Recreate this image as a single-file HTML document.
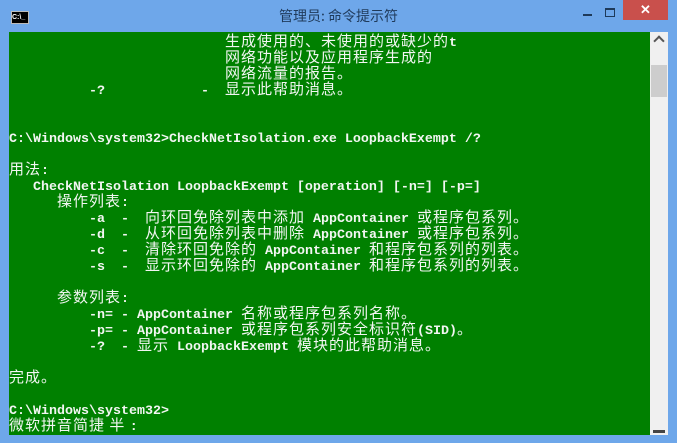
<!DOCTYPE html>
<html><head><meta charset="utf-8"><style>
body{margin:0;width:677px;height:443px;background:#6ea7ea;position:relative;overflow:hidden;font-family:"Liberation Mono","Noto Sans CJK SC",monospace}
#con{position:absolute;left:9px;top:32px;width:641px;height:403px;background:#008000}
#sb{position:absolute;left:650px;top:32px;width:18px;height:403px;background:#f0f0f0}
.l{position:absolute;left:0;margin-top:-3px;height:16px;line-height:16px;white-space:pre;color:#f2f6f2;font-size:13.33px;font-weight:bold}
.l::before{content:"\3000";display:inline-block;width:0;overflow:hidden;font-family:"Noto Sans CJK SC",sans-serif;font-weight:normal;font-size:15px;vertical-align:baseline}
.c{font-family:"Noto Sans CJK SC","WenQuanYi Zen Hei",sans-serif;font-weight:normal;font-size:15px;letter-spacing:1px}
#title{position:absolute;left:0;width:677px;top:6px;text-align:center;font-family:"Noto Sans CJK SC",sans-serif;font-size:14px;color:#1f3a5a}
</style></head><body>
<div style="position:absolute;left:11px;top:11px;width:16px;height:11px;background:#000;border:1px solid #bbb;color:#fff;font-size:7px;line-height:11px;font-family:'Liberation Sans';font-weight:bold">C:\_</div>
<div id="title">管理员: 命令提示符</div>
<div style="position:absolute;left:583px;top:14px;width:9px;height:2px;background:#1e3a5a"></div>
<div style="position:absolute;left:605px;top:8px;width:8px;height:6px;border:1px solid #1e3a5a;border-top-width:2px"></div>
<div style="position:absolute;left:623px;top:0;width:45px;height:20px;background:#c9504c;color:#fff;text-align:center;font:bold 13px/20px 'Liberation Sans'">✕</div>
<div id="con">
<div class="l" style="top:1px">                           <span class="c">生成使用的、未使用的或缺少的</span>t</div>
<div class="l" style="top:17px">                           <span class="c">网络功能以及应用程序生成的</span></div>
<div class="l" style="top:33px">                           <span class="c">网络流量的报告。</span></div>
<div class="l" style="top:49px">          -?            -  <span class="c">显示此帮助消息。</span></div>
<div class="l" style="top:97px">C:\Windows\system32&gt;CheckNetIsolation.exe LoopbackExempt /?</div>
<div class="l" style="top:129px"><span class="c">用法</span>:</div>
<div class="l" style="top:145px">   CheckNetIsolation LoopbackExempt [operation] [-n=] [-p=]</div>
<div class="l" style="top:161px">      <span class="c">操作列表</span>:</div>
<div class="l" style="top:177px">          -a  -  <span class="c">向环回免除列表中添加</span> AppContainer <span class="c">或程序包系列。</span></div>
<div class="l" style="top:193px">          -d  -  <span class="c">从环回免除列表中删除</span> AppContainer <span class="c">或程序包系列。</span></div>
<div class="l" style="top:209px">          -c  -  <span class="c">清除环回免除的</span> AppContainer <span class="c">和程序包系列的列表。</span></div>
<div class="l" style="top:225px">          -s  -  <span class="c">显示环回免除的</span> AppContainer <span class="c">和程序包系列的列表。</span></div>
<div class="l" style="top:257px">      <span class="c">参数列表</span>:</div>
<div class="l" style="top:273px">          -n= - AppContainer <span class="c">名称或程序包系列名称。</span></div>
<div class="l" style="top:289px">          -p= - AppContainer <span class="c">或程序包系列安全标识符</span>(SID)<span class="c">。</span></div>
<div class="l" style="top:305px">          -?  - <span class="c">显示</span> LoopbackExempt <span class="c">模块的此帮助消息。</span></div>
<div class="l" style="top:337px"><span class="c">完成。</span></div>
<div class="l" style="top:369px">C:\Windows\system32&gt;</div>
<div class="l" style="top:385px"><span class="c">微软拼音简捷 半 </span>:</div>
</div>
<div id="sb">
<div style="position:absolute;left:5px;top:5px;width:6px;height:6px;border-left:2px solid #555;border-top:2px solid #555;transform:rotate(45deg)"></div>
<div style="position:absolute;left:1px;top:33px;width:16px;height:32px;background:#cdcdcd"></div>
<div style="position:absolute;left:3px;top:398px;width:12px;height:3px;background:#444"></div>
</div>
</body></html>
